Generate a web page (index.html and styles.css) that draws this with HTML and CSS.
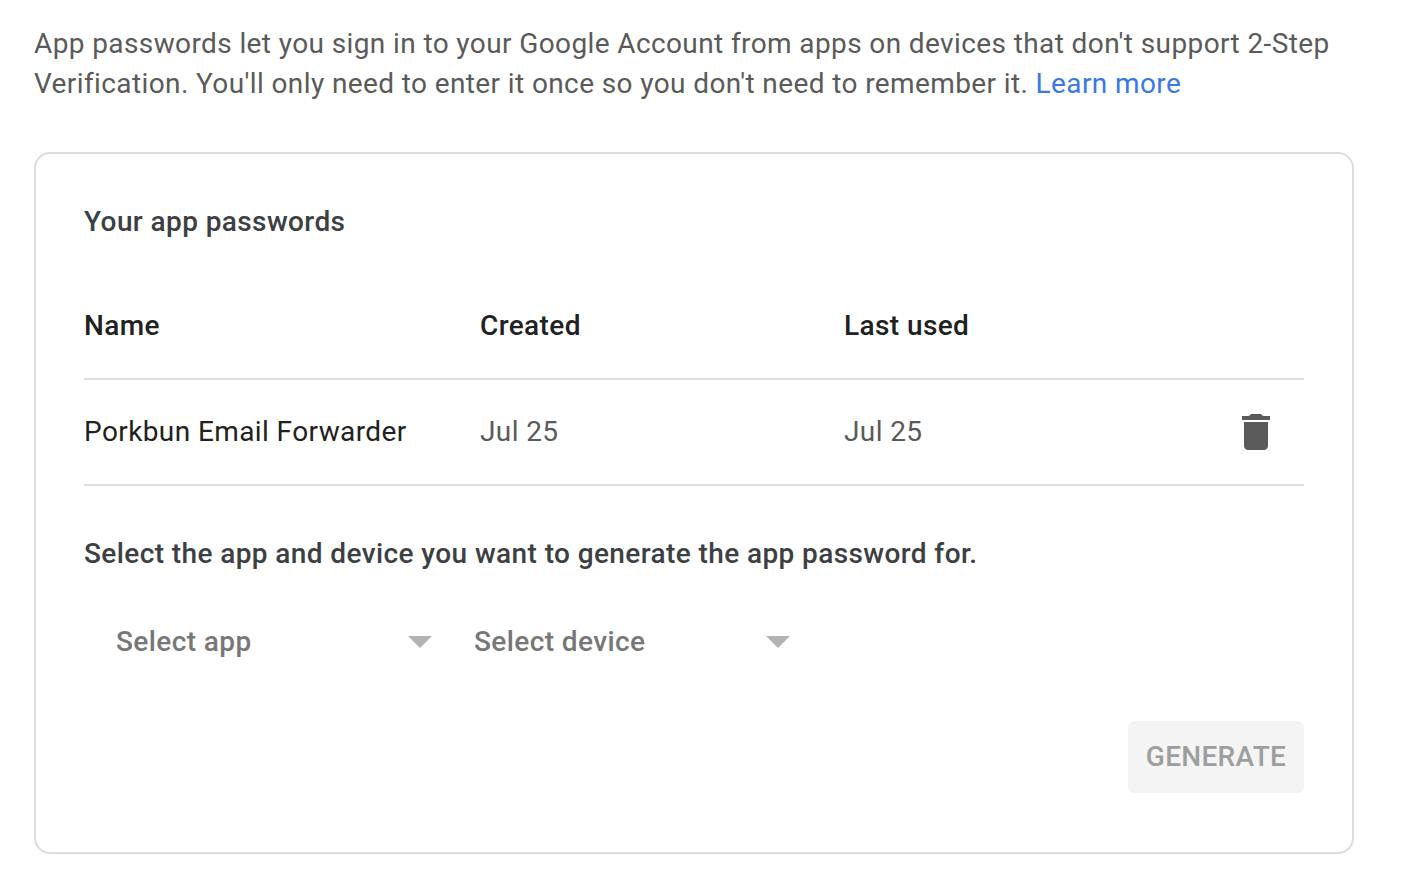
FILE: index.html
```html
<!DOCTYPE html>
<html lang="en">
<head>
<meta charset="utf-8">
<title>App passwords</title>
<link rel="stylesheet" href="styles.css">
</head>
<body>
<main class="page">
  <p class="intro">App passwords let you sign in to your Google Account from apps on devices that don't support 2-Step<br>Verification. You'll only need to enter it once so you don't need to remember it. <a class="link" href="#">Learn more</a></p>
  <section class="card">
    <h2 class="title">Your app passwords</h2>
    <div class="row head"><span>Name</span><span>Created</span><span>Last used</span></div>
    <div class="row entry">
      <span class="name">Porkbun Email Forwarder</span><span>Jul 25</span><span>Jul 25</span>
      <button class="delete" aria-label="Delete"><svg width="28" height="36" viewBox="0 0 28 36"><path fill="#5a5a5a" d="M2 32c0 2.200 1.800 4 4 4h16c2.200 0 4-1.800 4-4V8H2zM28 2h-7l-2-2H9L7 2H0v4h28z"/></svg></button>
    </div>
    <h2 class="prompt">Select the app and device you want to generate the app password for.</h2>
    <div class="selects">
      <div class="select"><span>Select app</span><i class="arrow"></i></div>
      <div class="select"><span>Select device</span><i class="arrow"></i></div>
    </div>
    <div class="actions"><button class="generate">GENERATE</button></div>
  </section>
</main>
</body>
</html>
```
FILE: styles.css
```css
* { box-sizing: border-box; }
body { margin: 0; background: #fff; font-family: Roboto, sans-serif; font-size: 28px; line-height: 40px; letter-spacing: .4px; color: #5a5a5a; }
.page { padding: 24px 50px 0 34px; }
.intro { margin: 0; letter-spacing: .39px; white-space: nowrap; }
.link { color: #3b78e7; text-decoration: none; }
.card { margin-top: 48px; width: 1320px; height: 702px; border: 2px solid #dadce0; border-radius: 16px; padding: 48px 48px 0; }
.title, .prompt { margin: 0; font-size: 28px; font-weight: 500; color: #3c4043; white-space: nowrap; }
.row { display: grid; grid-template-columns: 396px 364px 384px 1fr; align-items: center; height: 106px; border-bottom: 2px solid #dfdfdf; white-space: nowrap; }
.head { margin-top: 32px; font-weight: 500; color: #212121; }
.name { color: #212121; }
.delete { border: 0; padding: 0 0 0 14px; background: none; display: flex; }
.prompt { margin-top: 48px; }
.selects { display: flex; margin-top: 48px; padding-left: 32px; gap: 42px; }
.select { width: 316px; height: 40px; display: flex; align-items: center; justify-content: space-between; font-weight: 500; color: #777; }
.arrow { width: 24px; height: 12px; background: #b3b3b3; clip-path: polygon(0 0, 100% 0, 50% 100%); }
.actions { display: flex; justify-content: flex-end; margin-top: 59px; }
.generate { width: 176px; height: 72px; border: 0; border-radius: 6px; padding: 0; background: #f4f4f4; color: #9e9e9e; font: 500 28px/40px Roboto, sans-serif; letter-spacing: .3px; }
```
